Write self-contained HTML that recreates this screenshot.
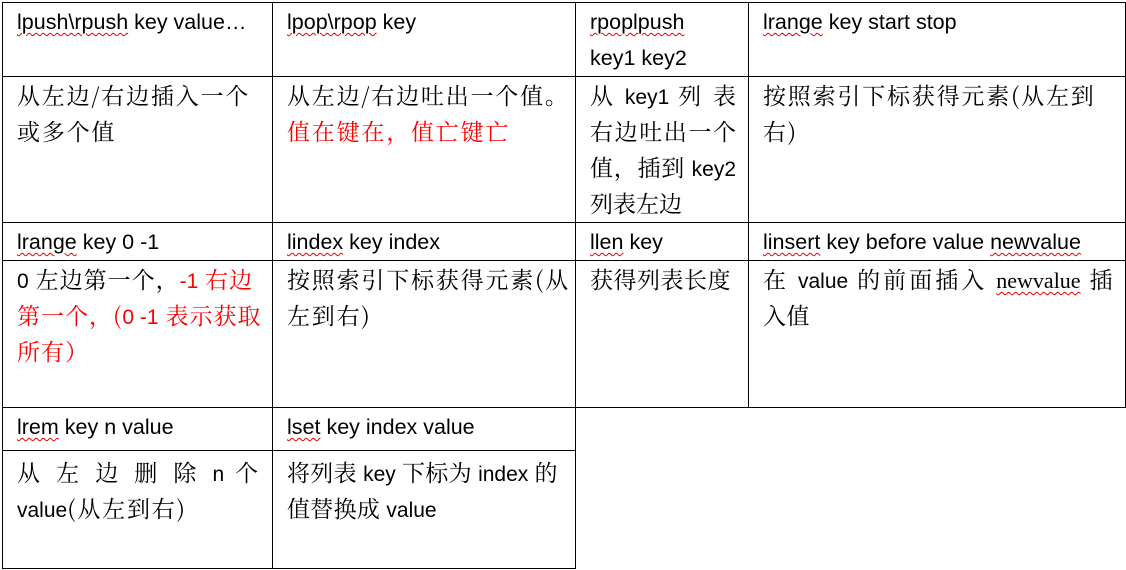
<!DOCTYPE html>
<html><head><meta charset="utf-8"><style>
html,body{margin:0;padding:0;background:#fff;width:1126px;height:570px;overflow:hidden}
.c{position:absolute;box-sizing:border-box;border:1px solid #000;padding:1px 8px 0 14px;font-family:"Liberation Sans","Noto Serif CJK SC",serif;font-size:21.5px;line-height:36px;color:#000;white-space:nowrap}
.c div{height:36px;line-height:36px;overflow:visible}
.z{font-family:"Noto Serif CJK SC","Noto Sans CJK SC",serif;font-size:23px;letter-spacing:1.8px;padding-top:0}
.l{font-family:"Liberation Sans",sans-serif;font-size:21px;letter-spacing:0;line-height:0}
.r{color:#f00}
.jl{text-align:justify;text-align-last:justify;white-space:normal}
.w{text-decoration:underline wavy #e00;text-decoration-thickness:1px;text-underline-offset:3px}
</style></head><body>
<div class="c" style="left:2px;top:2px;width:271px;height:75px"><span class="w">lpush\rpush</span> key value…</div>
<div class="c" style="left:272px;top:2px;width:304px;height:75px"><span class="w">lpop\rpop</span> key</div>
<div class="c" style="left:575px;top:2px;width:174px;height:75px"><div><span class="w">rpoplpush</span></div><div>key1 key2</div></div>
<div class="c" style="left:748px;top:2px;width:378px;height:75px"><span class="w">lrange</span> key start stop</div>

<div class="c z" style="left:2px;top:76px;width:271px;height:147px"><div>从左边/右边插入一个</div><div>或多个值</div></div>
<div class="c z" style="left:272px;top:76px;width:304px;height:147px"><div>从左边/右边吐出一个值。</div><div class="r">值在键在，值亡键亡</div></div>
<div class="c z" style="left:575px;top:76px;width:174px;height:147px;padding-right:12px;letter-spacing:0"><div class="jl">从 <span class="l">key1</span> 列 表</div><div class="jl">右边吐出一个</div><div class="jl">值，插到 <span class="l">key2</span></div><div>列表左边</div></div>
<div class="c z" style="left:748px;top:76px;width:378px;height:147px"><div>按照索引下标获得元素(从左到</div><div>右)</div></div>

<div class="c" style="left:2px;top:222px;width:271px;height:39px"><span class="w">lrange</span> key 0 -1</div>
<div class="c" style="left:272px;top:222px;width:304px;height:39px"><span class="w">lindex</span> key index</div>
<div class="c" style="left:575px;top:222px;width:174px;height:39px"><span class="w">llen</span> key</div>
<div class="c" style="left:748px;top:222px;width:378px;height:39px"><span class="w">linsert</span> key before value <span class="w">newvalue</span></div>

<div class="c z" style="left:2px;top:260px;width:271px;height:148px;letter-spacing:1px"><div><span class="l">0</span> 左边第一个，<span class="r"><span class="l">-1</span> 右边</span></div><div class="r">第一个，(<span class="l">0 -1</span> 表示获取</div><div class="r">所有）</div></div>
<div class="c z" style="left:272px;top:260px;width:304px;height:148px"><div>按照索引下标获得元素(从</div><div>左到右)</div></div>
<div class="c z" style="left:575px;top:260px;width:174px;height:148px;letter-spacing:0.5px"><div>获得列表长度</div></div>
<div class="c z" style="left:748px;top:260px;width:378px;height:148px;padding-right:12px;letter-spacing:0.5px"><div class="jl">在 <span class="l">value</span> 的前面插入 <span class="w" style="font-family:'Liberation Serif';font-size:22px;letter-spacing:0">newvalue</span> 插</div><div>入值</div></div>

<div class="c" style="left:2px;top:407px;width:271px;height:44px"><span class="w">lrem</span> key n value</div>
<div class="c" style="left:272px;top:407px;width:304px;height:44px"><span class="w">lset</span> key index value</div>
<div class="c z" style="left:2px;top:450px;width:271px;height:119px;padding-top:3px;padding-right:12px"><div class="jl">从 左 边 删 除 <span class="l">n</span> 个</div><div><span class="l">value</span>(从左到右)</div></div>
<div class="c z" style="left:272px;top:450px;width:304px;height:119px;padding-top:3px;letter-spacing:0.3px"><div>将列表 <span class="l">key</span> 下标为 <span class="l">index</span> 的</div><div>值替换成 <span class="l">value</span></div></div>
</body></html>
